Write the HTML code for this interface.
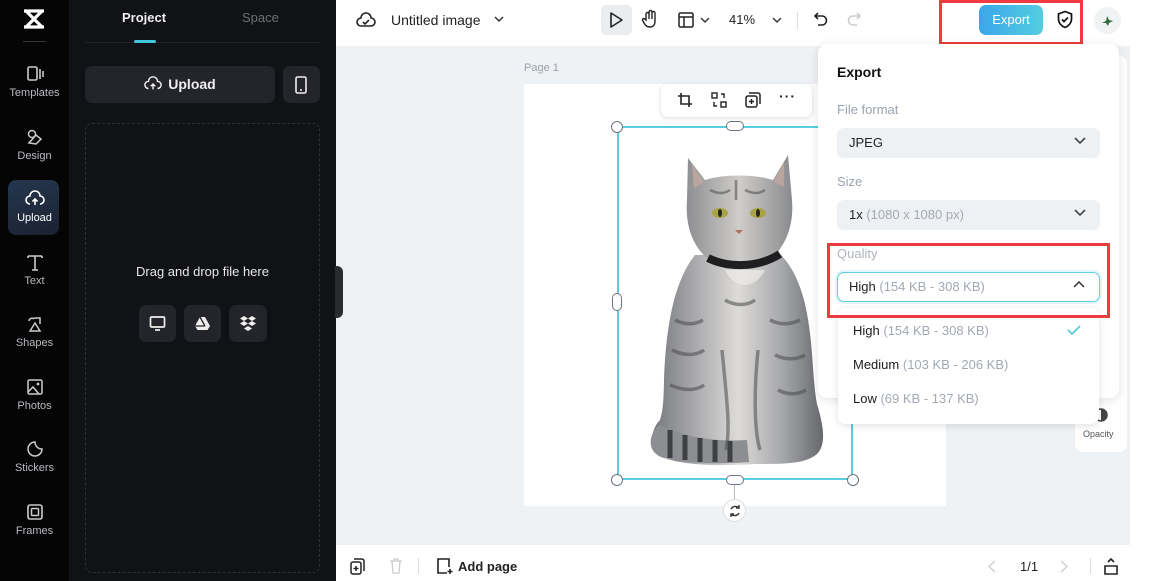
<!DOCTYPE html>
<html><head><meta charset="utf-8"><style>
*{box-sizing:border-box;margin:0;padding:0}
body{width:1159px;height:581px;overflow:hidden;position:relative;background:#fff;font-family:"Liberation Sans",sans-serif}
.a{position:absolute}
.rail{left:0;top:0;width:69px;height:581px;background:#050506}
.ri{position:absolute;left:0;width:69px;text-align:center;color:#b9bac0;font-size:11px}
.ri svg{display:block;margin:0 auto 3px}
.panel{left:69px;top:0;width:267px;height:581px;background:#111215}
.btn{background:#24252a;border-radius:7px}
.gray{background:#eff2f5}
.sel{border:2px solid #57cfe0}
.h{position:absolute;width:12px;height:12px;border-radius:50%;background:#fff;border:1px solid #6c7580}
.hb{position:absolute;background:#fff;border:1px solid #6c7580;border-radius:5px}
.field{position:absolute;left:19px;width:263px;height:30px;background:#eef1f4;border-radius:7px;font-size:13px;color:#222;padding:7px 12px}
.lbl{position:absolute;left:19px;font-size:13px;color:#9aa3ad}
.g{color:#a2a9b2}
.chev{position:absolute;right:14px;top:9px}
.opt{position:absolute;left:15px;font-size:13px;color:#1c1c1c}
</style></head><body>
<div class="a rail">
 <svg class="a" style="left:21px;top:8px" width="26" height="22" viewBox="0 0 26 22"><path d="M3 3h20M3 19h20M5 3l16 16M21 3L5 19" stroke="#fff" stroke-width="3.2" fill="none"/></svg>
 <div class="a" style="left:23px;top:41px;width:23px;height:1px;background:#333"></div>
 <div class="ri" style="top:64px"><svg width="20" height="20" viewBox="0 0 20 20"><rect x="3" y="3" width="9" height="13" rx="1.5" stroke="#ccc" stroke-width="1.6" fill="none"/><path d="M15 5v10M18 7v6" stroke="#ccc" stroke-width="1.6"/></svg>Templates</div>
 <div class="ri" style="top:127px"><svg width="20" height="20" viewBox="0 0 20 20"><circle cx="7" cy="7" r="3.5" stroke="#ccc" stroke-width="1.5" fill="none"/><path d="M4 16l7-8 5 4-5 5z" stroke="#ccc" stroke-width="1.5" fill="none"/></svg>Design</div>
 <div class="a" style="left:8px;top:180px;width:51px;height:55px;border-radius:8px;background:linear-gradient(160deg,#25374f,#1b2130)"></div>
 <div class="ri" style="top:189px;color:#fff"><svg width="20" height="20" viewBox="0 0 20 20"><path d="M5 15a4 4 0 0 1 0-8 5 5 0 0 1 10 0 4 4 0 0 1 0 8M10 16v-6M7.5 12.5L10 10l2.5 2.5" stroke="#fff" stroke-width="1.6" fill="none"/></svg>Upload</div>
 <div class="ri" style="top:252px"><svg width="20" height="20" viewBox="0 0 20 20"><path d="M3 4h14M10 4v14M3 4v2M17 4v2M7 18h6" stroke="#ccc" stroke-width="1.6" fill="none"/></svg>Text</div>
 <div class="ri" style="top:314px"><svg width="20" height="20" viewBox="0 0 20 20"><path d="M9 4H15V10M4 7a3 3 0 0 1 5-2M5 17l5-8 5 8z" stroke="#ccc" stroke-width="1.5" fill="none"/></svg>Shapes</div>
 <div class="ri" style="top:377px"><svg width="20" height="20" viewBox="0 0 20 20"><rect x="3" y="3" width="14" height="14" rx="1.5" stroke="#ccc" stroke-width="1.5" fill="none"/><path d="M3 15l5-5 6 7" stroke="#ccc" stroke-width="1.5" fill="none"/><circle cx="13" cy="7" r="1.4" fill="#ccc"/></svg>Photos</div>
 <div class="ri" style="top:439px"><svg width="20" height="20" viewBox="0 0 20 20"><path d="M10 3a7 7 0 1 0 7 7c-4 0-7-3-7-7z" stroke="#ccc" stroke-width="1.5" fill="none"/></svg>Stickers</div>
 <div class="ri" style="top:502px"><svg width="20" height="20" viewBox="0 0 20 20"><rect x="3" y="3" width="14" height="14" rx="2" stroke="#ccc" stroke-width="1.6" fill="none"/><rect x="6.5" y="6.5" width="7" height="7" rx="1" stroke="#ccc" stroke-width="1.5" fill="none"/></svg>Frames</div>
</div>
<div class="a panel">
 <div class="a" style="left:53px;top:10px;font-size:13px;font-weight:bold;color:#eee">Project</div>
 <div class="a" style="left:173px;top:10px;font-size:13px;color:#6d6f75">Space</div>
 <div class="a" style="left:16px;top:42px;width:235px;height:1px;background:#222"></div>
 <div class="a" style="left:65px;top:40px;width:22px;height:3px;background:#3fc5dc;border-radius:2px"></div>
 <div class="a btn" style="left:16px;top:66px;width:190px;height:37px;color:#eee;font-size:14px;font-weight:bold;text-align:center;line-height:37px"><svg style="vertical-align:-4px;margin-right:6px" width="18" height="18" viewBox="0 0 20 20"><path d="M5 15a4 4 0 0 1 0-8 5 5 0 0 1 10 0 4 4 0 0 1 0 8M10 16v-6M7.5 12.5L10 10l2.5 2.5" stroke="#eee" stroke-width="1.6" fill="none"/></svg>Upload</div>
 <div class="a btn" style="left:214px;top:66px;width:37px;height:37px"><svg class="a" style="left:11px;top:10px" width="14" height="18" viewBox="0 0 14 18"><rect x="2" y="1" width="10" height="16" rx="1.5" stroke="#eee" stroke-width="1.6" fill="none"/><path d="M6 14h2" stroke="#eee" stroke-width="1.5"/></svg></div>
 <div class="a" style="left:16px;top:123px;width:235px;height:450px;border:1px dashed #2e3035;border-radius:7px"></div>
 <div class="a" style="left:16px;top:264px;width:235px;text-align:center;color:#e6e6e6;font-size:13px">Drag and drop file here</div>
 <div class="a btn" style="left:70px;top:305px;width:37px;height:37px"><svg class="a" style="left:10px;top:10px" width="17" height="17" viewBox="0 0 17 17"><rect x="1.5" y="2" width="14" height="10" rx="1" stroke="#eee" stroke-width="1.7" fill="none"/><path d="M6 15h5" stroke="#eee" stroke-width="1.7"/></svg></div>
 <div class="a btn" style="left:115px;top:305px;width:37px;height:37px"><svg class="a" style="left:10px;top:11px" width="17" height="15" viewBox="0 0 17 15"><path d="M6 1h5l5 9-2.5 4H3.5L1 10z" fill="#eee"/><path d="M6 1l5 9M1 10h10" stroke="#24252a" stroke-width="1.3"/></svg></div>
 <div class="a btn" style="left:160px;top:305px;width:38px;height:37px"><svg class="a" style="left:10px;top:11px" width="18" height="15" viewBox="0 0 18 15"><path d="M5 0l4 2.5-4 2.5-4-2.5zM13 0l4 2.5-4 2.5-4-2.5zM5 5l4 2.5-4 2.5-4-2.5zM13 5l4 2.5-4 2.5-4-2.5zM9 10l4 2.5-4 2.5-4-2.5z" fill="#eee"/></svg></div>
</div>
<div class="a gray" style="left:336px;top:46px;width:794px;height:499px"></div>
<div class="a" style="left:335px;top:266px;width:8px;height:52px;background:#2a2b2f;border-radius:0 6px 6px 0"></div>
<svg class="a" style="left:356px;top:11px" width="20" height="18" viewBox="0 0 20 18"><path d="M5 15a4 4 0 0 1 0-8 5 5 0 0 1 10 0 4 4 0 0 1 0 8z" stroke="#222" stroke-width="1.6" fill="none"/><path d="M7 11l2 2 4-4" stroke="#222" stroke-width="1.6" fill="none"/></svg>
<div class="a" style="left:391px;top:12px;font-size:14px;color:#222">Untitled image</div>
<svg class="a" style="left:494px;top:16px" width="10" height="7"><path d="M1 1l4 4 4-4" stroke="#333" stroke-width="1.5" fill="none"/></svg>
<div class="a" style="left:601px;top:5px;width:31px;height:30px;background:#eaedf0;border-radius:5px"></div>
<svg class="a" style="left:608px;top:11px" width="16" height="18"><path d="M3 2l11 7-11 7z" stroke="#222" stroke-width="1.6" fill="none" stroke-linejoin="round"/></svg>
<svg class="a" style="left:641px;top:9px" width="18" height="20"><path d="M5 11V5a1.5 1.5 0 0 1 3 0v5V3a1.5 1.5 0 0 1 3 0v7V4a1.5 1.5 0 0 1 3 0v8c0 4-2 6-5 6s-4-1-6-4l-1.5-3a1.3 1.3 0 0 1 2.3-1z" stroke="#222" stroke-width="1.4" fill="none"/></svg>
<svg class="a" style="left:678px;top:12px" width="16" height="16"><rect x="1" y="1" width="14" height="14" rx="1.5" stroke="#222" stroke-width="1.5" fill="none"/><path d="M1 5h14M6 5v10" stroke="#222" stroke-width="1.5"/></svg>
<svg class="a" style="left:700px;top:17px" width="10" height="7"><path d="M1 1l4 4 4-4" stroke="#333" stroke-width="1.4" fill="none"/></svg>
<div class="a" style="left:729px;top:12px;font-size:13px;color:#222">41%</div>
<svg class="a" style="left:772px;top:17px" width="10" height="7"><path d="M1 1l4 4 4-4" stroke="#333" stroke-width="1.4" fill="none"/></svg>
<div class="a" style="left:797px;top:12px;width:1px;height:17px;background:#ddd"></div>
<svg class="a" style="left:813px;top:11px" width="16" height="17"><path d="M5 2L2 5l3 3M2 5h7a4.5 4.5 0 0 1 0 9H5" stroke="#222" stroke-width="1.6" fill="none"/></svg>
<svg class="a" style="left:846px;top:11px" width="16" height="17"><path d="M11 2l3 3-3 3M14 5H7a4.5 4.5 0 0 0 0 9h4" stroke="#ccc" stroke-width="1.6" fill="none"/></svg>
<div class="a" style="left:979px;top:5px;width:64px;height:30px;border-radius:7px;background:linear-gradient(90deg,#3aa6ea,#54cde0);color:#fff;font-size:13px;text-align:center;line-height:30px">Export</div>
<svg class="a" style="left:1056px;top:10px" width="18" height="20"><path d="M9 1.5l6.5 2.5v5c0 4-3 7-6.5 8.5C5.5 16 2.5 13 2.5 9V4z" stroke="#111" stroke-width="1.7" fill="none"/><path d="M6 9.5l2 2 4-4" stroke="#111" stroke-width="1.7" fill="none"/></svg>
<div class="a" style="left:1094px;top:7px;width:27px;height:27px;border-radius:50%;background:#f1f2f3"></div>
<svg class="a" style="left:1100px;top:14px" width="14" height="13"><path d="M2 9l4-2 1-5 2 4 4 1-4 2-1 3-2-3z" fill="#2e6b3e"/></svg>
<div class="a" style="left:939px;top:0;width:144px;height:45px;border:3px solid #ef3a3f"></div>
<div class="a" style="left:524px;top:62px;font-size:11px;color:#9aa1a8">Page 1</div>
<div class="a" style="left:524px;top:84px;width:422px;height:422px;background:#fff"></div>
<!-- cat -->
<svg class="a" style="left:640px;top:150px" width="200" height="320" viewBox="0 0 200 320">
<defs><linearGradient id="cg" x1="0" y1="0" x2="1" y2="0"><stop offset="0" stop-color="#75777b"/><stop offset=".3" stop-color="#b4b4b6"/><stop offset=".5" stop-color="#dddbd7"/><stop offset=".75" stop-color="#a9aaad"/><stop offset="1" stop-color="#66686c"/></linearGradient>
<linearGradient id="hg" x1="0" y1="0" x2="1" y2="0"><stop offset="0" stop-color="#8e8f92"/><stop offset=".5" stop-color="#cfcdca"/><stop offset="1" stop-color="#8a8b8e"/></linearGradient></defs>
<!-- body -->
<path d="M55 105C35 130 28 170 25 210c-2 25 0 45 -5 60-10 10-12 30 5 38 20 8 60 8 90 6 30 0 50 0 62-10 10-10 6-30 0-50-5-25-3-60-12-100-6-25-15-40-25-50z" fill="url(#cg)"/>
<!-- tail -->
<path d="M20 275c-12 8-14 28 4 33 25 6 60 6 85 4l-2-22c-30 2-60-2-87-15z" fill="#8d8e92"/>
<path d="M30 280v28M45 285v25M60 288v24M75 290v22M90 291v21" stroke="#3f4044" stroke-width="5"/>
<!-- stripes -->
<path d="M35 170c10 5 20 5 28 0M32 200c12 6 24 6 32 0M30 235c14 6 26 6 34 0M130 170c10 5 20 5 30 0M135 205c10 5 22 5 30 0M138 240c10 5 20 5 28 0M85 150c10 6 22 6 30 0M82 200c6 60 8 80 4 100M118 200c-4 40-4 80 2 100" stroke="#4a4b4f" stroke-width="3.5" fill="none" opacity=".55"/>
<!-- head -->
<path d="M48 8L65 30c18-6 50-6 68 0L148 5l4 45c2 25-6 45-20 58-15 10-50 10-65 0-14-12-22-32-20-58z" fill="url(#hg)"/>
<path d="M52 14l12 18-10 6zM144 12l-10 20 10 5z" fill="#c9a9a0" opacity=".7"/>
<path d="M70 40c8 4 14 4 20 0M105 40c8 4 14 4 20 0M96 30v20" stroke="#555" stroke-width="2.5" fill="none" opacity=".6"/>
<ellipse cx="80" cy="63" rx="8" ry="5" fill="#a8a345"/><ellipse cx="118" cy="63" rx="8" ry="5" fill="#a8a345"/>
<ellipse cx="80" cy="63" rx="2" ry="4" fill="#222"/><ellipse cx="118" cy="63" rx="2" ry="4" fill="#222"/>
<path d="M95 80l4 4 4-4z" fill="#b07060"/>
<path d="M68 108c20 10 50 10 72 -4" stroke="#1e1e20" stroke-width="8" fill="none"/>
<path d="M85 120c10 20 30 20 40 0" fill="#eeece8" opacity=".7"/>
</svg>
<div class="a sel" style="left:617px;top:126px;width:236px;height:354px"></div>
<div class="h" style="left:611px;top:121px"></div><div class="h" style="left:847px;top:121px"></div>
<div class="h" style="left:611px;top:474px"></div><div class="h" style="left:847px;top:474px"></div>
<div class="hb" style="left:726px;top:121px;width:18px;height:10px"></div>
<div class="hb" style="left:726px;top:475px;width:18px;height:10px"></div>
<div class="hb" style="left:612px;top:293px;width:10px;height:18px"></div>
<div class="a" style="left:734px;top:485px;width:1px;height:14px;background:#bbb"></div>
<div class="a" style="left:723px;top:499px;width:23px;height:23px;border-radius:50%;background:#fff;border:1px solid #ddd"></div>
<svg class="a" style="left:728px;top:504px" width="14" height="14"><path d="M11 4a5 5 0 0 0-8 1M3 10a5 5 0 0 0 8-1M11 1v3H8M3 13v-3h3" stroke="#333" stroke-width="1.4" fill="none"/></svg>
<div class="a" style="left:661px;top:84px;width:151px;height:33px;background:#fff;border-radius:7px;box-shadow:0 1px 5px rgba(0,0,0,.15)"></div>
<svg class="a" style="left:677px;top:92px" width="16" height="16"><path d="M4 1v11h11M1 4h11v11" stroke="#222" stroke-width="1.6" fill="none"/></svg>
<svg class="a" style="left:711px;top:92px" width="16" height="16"><rect x="1" y="1" width="5" height="5" stroke="#222" stroke-width="1.4" fill="none"/><rect x="10" y="10" width="5" height="5" stroke="#222" stroke-width="1.4" fill="none"/><path d="M10 2h3v4M6 14H3v-4" stroke="#222" stroke-width="1.4" fill="none"/></svg>
<svg class="a" style="left:745px;top:92px" width="16" height="16"><rect x="1" y="4" width="11" height="11" rx="2" stroke="#222" stroke-width="1.5" fill="none"/><path d="M4 1h9a2 2 0 0 1 2 2v9M6.5 7v5M4 9.5h5" stroke="#222" stroke-width="1.5" fill="none"/></svg>
<div class="a" style="left:779px;top:88px;font-size:14px;color:#222;font-weight:bold;letter-spacing:1px">···</div>
<div class="a" style="left:1075px;top:55px;width:52px;height:397px;background:#fff;border-radius:8px"></div>
<svg class="a" style="left:1093px;top:407px" width="16" height="16"><circle cx="8" cy="8" r="6" stroke="#444" stroke-width="1.5" fill="none"/><path d="M8 2a6 6 0 0 1 0 12z" fill="#444"/></svg>
<div class="a" style="left:1083px;top:429px;font-size:9px;color:#555">Opacity</div>
<div class="a" style="left:818px;top:44px;width:301px;height:354px;background:#fff;border-radius:9px;box-shadow:0 2px 10px rgba(0,0,0,.12)">
 <div class="a" style="left:19px;top:20px;font-size:14px;font-weight:bold;color:#111">Export</div>
 <div class="lbl" style="top:58px">File format</div>
 <div class="field" style="top:84px">JPEG<svg class="chev" width="12" height="8"><path d="M1 1l5 5 5-5" stroke="#333" stroke-width="1.5" fill="none"/></svg></div>
 <div class="lbl" style="top:130px">Size</div>
 <div class="field" style="top:156px">1x <span class="g">(1080 x 1080 px)</span><svg class="chev" width="12" height="8"><path d="M1 1l5 5 5-5" stroke="#333" stroke-width="1.5" fill="none"/></svg></div>
 <div class="lbl" style="top:202px;color:#aeb5bd">Quality</div>
 <div class="field" style="top:228px;background:#fff;border:1.5px solid #5fd0e2;box-shadow:0 0 0 2px #e2f6fa;padding:6px 11px">High <span class="g">(154 KB - 308 KB)</span><svg class="chev" style="top:8px" width="12" height="8"><path d="M1 6l5-5 5 5" stroke="#333" stroke-width="1.5" fill="none"/></svg></div>
</div>
<div class="a" style="left:838px;top:308px;width:261px;height:116px;background:#fff;border-radius:8px;box-shadow:0 2px 8px rgba(0,0,0,.12)">
 <div class="opt" style="top:15px">High <span class="g">(154 KB - 308 KB)</span></div>
 <svg class="a" style="left:229px;top:17px" width="14" height="10"><path d="M1 5l4 4 8-8" stroke="#4fc8dd" stroke-width="1.6" fill="none"/></svg>
 <div class="opt" style="top:49px">Medium <span class="g">(103 KB - 206 KB)</span></div>
 <div class="opt" style="top:83px">Low <span class="g">(69 KB - 137 KB)</span></div>
</div>
<div class="a" style="left:827px;top:243px;width:283px;height:75px;border:3px solid #ef3a3f"></div>
<svg class="a" style="left:350px;top:558px" width="16" height="17"><rect x="1" y="4" width="10" height="12" rx="2" stroke="#222" stroke-width="1.5" fill="none"/><path d="M4 1h8a2 2 0 0 1 2 2v10M6 8v5M3.5 10.5h5" stroke="#222" stroke-width="1.5" fill="none"/></svg>
<svg class="a" style="left:389px;top:558px" width="14" height="16"><path d="M1 3h12M5 3V1h4v2M3 3l1 12h6l1-12" stroke="#ccc" stroke-width="1.3" fill="none"/></svg>
<div class="a" style="left:418px;top:558px;width:1px;height:16px;background:#ddd"></div>
<svg class="a" style="left:436px;top:557px" width="18" height="18"><path d="M11 16H2V2h11v8M14 12v5M11.5 14.5h5" stroke="#222" stroke-width="1.6" fill="none"/></svg>
<div class="a" style="left:458px;top:559px;font-size:13px;color:#222;font-weight:bold">Add page</div>
<svg class="a" style="left:988px;top:560px" width="8" height="13"><path d="M7 1L1 6.5 7 12" stroke="#ccc" stroke-width="1.3" fill="none"/></svg>
<div class="a" style="left:1020px;top:559px;font-size:13px;color:#222">1/1</div>
<svg class="a" style="left:1060px;top:560px" width="8" height="13"><path d="M1 1l6 5.5L1 12" stroke="#ccc" stroke-width="1.3" fill="none"/></svg>
<div class="a" style="left:1090px;top:558px;width:1px;height:16px;background:#ddd"></div>
<svg class="a" style="left:1103px;top:556px" width="16" height="20"><path d="M2 10h12v8H2zM5 6l3-3 3 3" stroke="#222" stroke-width="1.6" fill="none"/></svg>
</body></html>
